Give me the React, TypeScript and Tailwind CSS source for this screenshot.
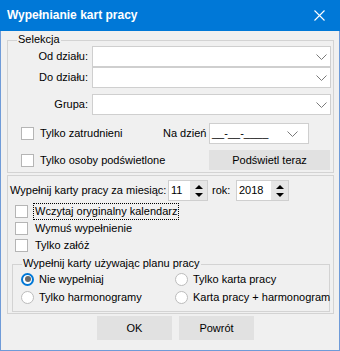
import React from "react";

const FONT = { fontFamily: "'Liberation Sans', Arial, sans-serif" };

function Chevron() {
  return (
    <svg width="11" height="6" viewBox="0 0 11 6" className="shrink-0">
      <path d="M0.5 0.5 L5.5 5.5 L10.5 0.5" fill="none" stroke="#7a7a7a" strokeWidth="1" />
    </svg>
  );
}

function Combo() {
  return (
    <div className="w-[239px] h-[21px] bg-white border border-[#cfcfcf] flex items-center justify-end pr-[3px]">
      <Chevron />
    </div>
  );
}

function Check({ label, focused = false }: { label: string; focused?: boolean }) {
  return (
    <div className="flex items-center h-[17px]">
      <div className="w-[13px] h-[13px] bg-white border border-[#b5b5b5] shrink-0" />
      <span
        className={`ml-[5px] h-[17px] flex items-center px-[1px] border border-dotted ${
          focused ? "border-black" : "border-transparent"
        }`}
      >
        {label}
      </span>
    </div>
  );
}

function Radio({ label, checked = false }: { label: string; checked?: boolean }) {
  return (
    <div className="flex items-center h-[18px] whitespace-nowrap">
      <div
        className={`w-[13px] h-[13px] rounded-full bg-white border shrink-0 flex items-center justify-center ${
          checked ? "border-[#0078d7] border-[2px]" : "border-[#bcbcbc]"
        }`}
      >
        {checked && <div className="w-[6px] h-[6px] rounded-full bg-[#6a6a6a]" />}
      </div>
      <span className="ml-[5px]">{label}</span>
    </div>
  );
}

function Spinner({ value, width }: { value: string; width: string }) {
  return (
    <div className={`${width} h-[21px] bg-white border border-[#cfcfcf] flex`}>
      <div className="flex-1 flex items-center pl-[2px]">{value}</div>
      <div className="w-[17px] bg-[#e6e6e6] flex flex-col items-center justify-center gap-[4px]">
        <svg width="8" height="4" viewBox="0 0 8 4">
          <path d="M0 4 L4 0 L8 4 Z" fill="#000" />
        </svg>
        <svg width="8" height="4" viewBox="0 0 8 4">
          <path d="M0 0 L8 0 L4 4 Z" fill="#000" />
        </svg>
      </div>
    </div>
  );
}

export default function App() {
  return (
    <div
      className="w-[340px] h-[351px] flex flex-col text-[11px] leading-[13px] text-black select-none"
      style={FONT}
    >
      {/* Title bar */}
      <div className="h-[31px] bg-[#0078d7] flex items-center justify-between pl-[7px] pr-[15px] shrink-0">
        <span className="text-white font-bold text-[12px]">Wypełnianie kart pracy</span>
        <svg width="11" height="11" viewBox="0 0 11 11">
          <path d="M0.5 0.5 L10.5 10.5 M10.5 0.5 L0.5 10.5" stroke="#fff" strokeWidth="1.1" />
        </svg>
      </div>

      {/* Body */}
      <div className="flex-1 bg-[#f0f0f0] border-x border-b border-[#6f9bd8] flex flex-col">
        {/* Selekcja */}
        <div className="relative mt-[9px] ml-[6px] w-[327px] h-[133px] border border-[#d3d3d3] flex flex-col">
          <span className="absolute left-[9px] -top-[8px] bg-[#f0f0f0] px-[1px]">Selekcja</span>

          <div className="flex items-center mt-[5px]">
            <span className="w-[80px] text-right">Od działu:</span>
            <div className="ml-[4px]">
              <Combo />
            </div>
          </div>
          <div className="flex items-center">
            <span className="w-[80px] text-right">Do działu:</span>
            <div className="ml-[4px]">
              <Combo />
            </div>
          </div>
          <div className="flex items-center mt-[6px]">
            <span className="w-[80px] text-right">Grupa:</span>
            <div className="ml-[4px]">
              <Combo />
            </div>
          </div>

          <div className="flex items-center mt-[8px] h-[21px]">
            <div className="w-[155px] pl-[13px] flex items-center">
              <div className="w-[13px] h-[13px] bg-white border border-[#b5b5b5]" />
              <span className="ml-[6px]">Tylko zatrudnieni</span>
            </div>
            <span className="w-[46px]">Na dzień</span>
            <div className="w-[100px] h-[21px] bg-white border border-[#cfcfcf] flex items-center justify-between pl-[2px] pr-[10px]">
              <span>__-__-____</span>
              <Chevron />
            </div>
          </div>

          <div className="flex items-center mt-[6px] h-[20px]">
            <div className="w-[201px] pl-[13px] flex items-center">
              <div className="w-[13px] h-[13px] bg-white border border-[#b5b5b5]" />
              <span className="ml-[6px]">Tylko osoby podświetlone</span>
            </div>
            <div className="w-[121px] h-[20px] bg-[#e1e1e1] flex items-center justify-center">
              Podświetl teraz
            </div>
          </div>
        </div>

        {/* Wypełnianie */}
        <div className="mt-[2px] ml-[6px] w-[327px] h-[139px] border border-[#d3d3d3] flex flex-col">
          <div className="flex items-center mt-[4px] h-[21px] pl-[2px]">
            <span className="w-[158px]">Wypełnij karty pracy za miesiąc:</span>
            <Spinner value="11" width="w-[40px]" />
            <span className="w-[28px] pl-[4px]">rok:</span>
            <Spinner value="2018" width="w-[53px]" />
          </div>

          <div className="flex flex-col mt-[2px] pl-[7px]">
            <Check label="Wczytaj oryginalny kalendarz" focused />
            <Check label="Wymuś wypełnienie" />
            <Check label="Tylko załóż" />
          </div>

          <div className="relative mt-[10px] ml-[4px] w-[318px] h-[48px] border border-[#d3d3d3]">
            <span className="absolute left-[9px] -top-[8px] bg-[#f0f0f0] px-[1px]">
              Wypełnij karty używając planu pracy
            </span>
            <div className="grid grid-cols-[154px_1fr] mt-[5px] pl-[8px]">
              <Radio label="Nie wypełniaj" checked />
              <Radio label="Tylko karta pracy" />
              <Radio label="Tylko harmonogramy" />
              <Radio label="Karta pracy + harmonogram" />
            </div>
          </div>
        </div>

        {/* Buttons */}
        <div className="flex gap-[7px] mt-[2px] ml-[96px]">
          <div className="w-[75px] h-[24px] bg-[#e1e1e1] flex items-center justify-center">OK</div>
          <div className="w-[75px] h-[24px] bg-[#e1e1e1] flex items-center justify-center">Powrót</div>
        </div>
      </div>
    </div>
  );
}
